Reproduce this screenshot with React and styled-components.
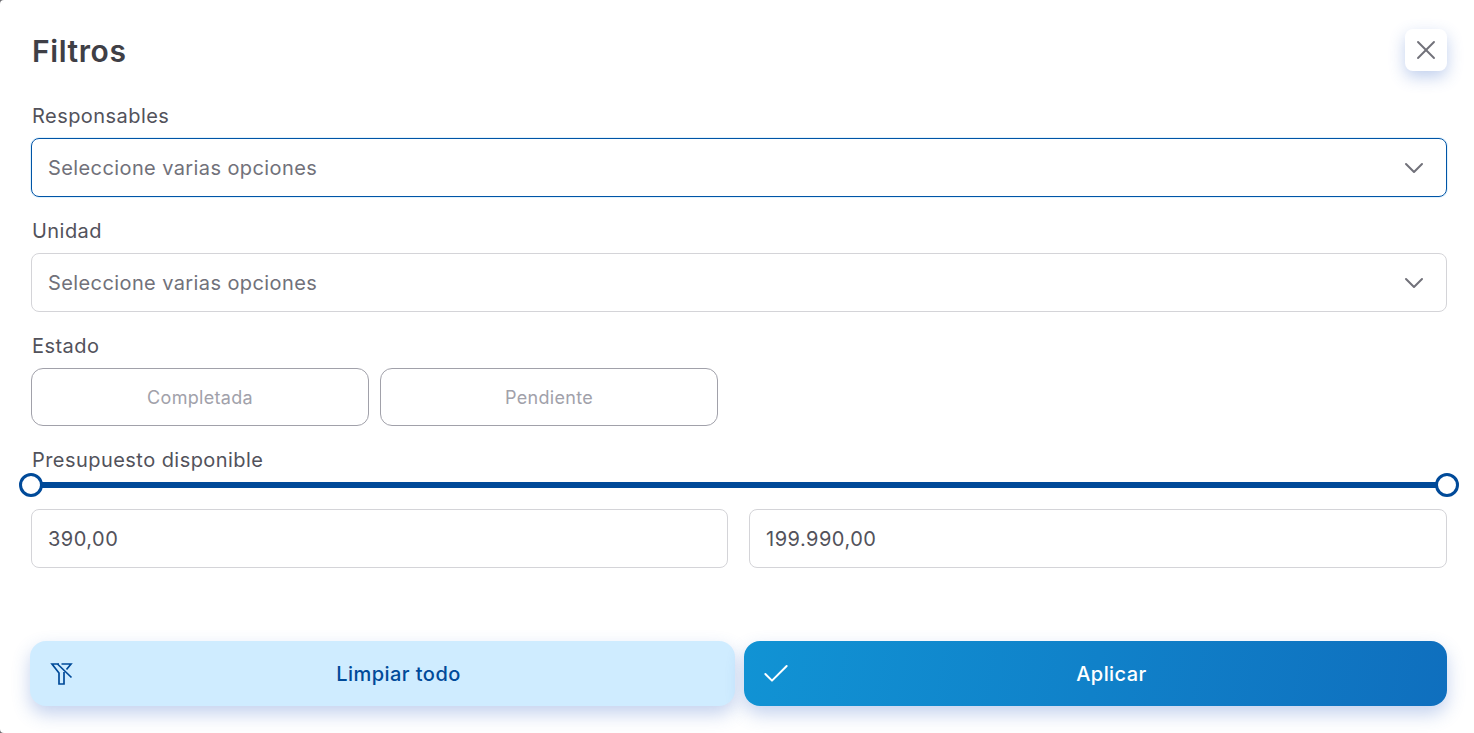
import React from "react";
import styled, { createGlobalStyle } from "styled-components";
import { X, ChevronDown, Check } from "lucide-react";

const GlobalStyle = createGlobalStyle`
  html, body {
    margin: 0;
    padding: 0;
    background: #6b6b70;
  }
  * {
    box-sizing: border-box;
  }
`;

const FilterOffIcon = () => (
  <svg width="32" height="32" viewBox="0 0 32 32" fill="none" stroke="currentColor" strokeWidth="1.7">
    <path d="M15.500 6H25L20.500 11.500" />
    <path d="M13 6H6L13 15V26H18V14" />
    <path d="M11.500 6L25.500 19.500" />
  </svg>
);

const App = () => {
  return (
    <Modal>
      <GlobalStyle />
      <Header>
        <Title>Filtros</Title>
        <CloseButton>
          <X size={32} strokeWidth={1.4} />
        </CloseButton>
      </Header>
      <Label>Responsables</Label>
      <Select $focused>
        <span>Seleccione varias opciones</span>
        <ChevronDown size={32} strokeWidth={1.5} />
      </Select>
      <Label>Unidad</Label>
      <Select>
        <span>Seleccione varias opciones</span>
        <ChevronDown size={32} strokeWidth={1.5} />
      </Select>
      <Label>Estado</Label>
      <StateRow>
        <StateButton>Completada</StateButton>
        <StateButton>Pendiente</StateButton>
      </StateRow>
      <Label $tight>Presupuesto disponible</Label>
      <Slider>
        <Track />
        <Thumb $side="left" />
        <Thumb $side="right" />
      </Slider>
      <Inputs>
        <Input>390,00</Input>
        <Input>199.990,00</Input>
      </Inputs>
      <Footer>
        <ClearButton>
          <FilterOffIcon />
          <ButtonText>Limpiar todo</ButtonText>
        </ClearButton>
        <ApplyButton>
          <Check size={32} strokeWidth={1.5} />
          <ButtonText>Aplicar</ButtonText>
        </ApplyButton>
      </Footer>
    </Modal>
  );
};

const Modal = styled.div`
  width: 1474px;
  height: 733px;
  padding: 29px 27px 0 31px;
  font-family: Inter, "Noto Sans", sans-serif;
  background: #fff;
  border-radius: 4px 0 0 4px;
  overflow: hidden;
`;

const Header = styled.div`
  display: flex;
  justify-content: space-between;
  align-items: flex-start;
  height: 42px;
  margin-bottom: 34px;
`;

const Title = styled.h1`
  margin: 4px 0 0 1px;
  font-size: 30px;
  line-height: 36px;
  font-weight: 600;
  letter-spacing: 0.6px;
  color: #3f3f46;
`;

const CloseButton = styled.button`
  display: flex;
  align-items: center;
  justify-content: center;
  width: 42px;
  height: 42px;
  padding: 0;
  border: none;
  border-radius: 8px;
  background: #fff;
  color: #71717a;
  box-shadow: 0 6px 16px rgba(59, 105, 200, 0.32);
`;

const Label = styled.div`
  height: 22px;
  margin: 0 0 ${(p) => (p.$tight ? "2px" : "11px")} 1px;
  font-size: 20px;
  line-height: 22px;
  letter-spacing: 0.45px;
  color: #52525b;
`;

const Select = styled.div`
  display: flex;
  align-items: center;
  justify-content: space-between;
  height: 59px;
  margin-bottom: 23px;
  padding: 0 16px;
  border: 1px solid ${(p) => (p.$focused ? "#0054a6" : "#d4d4d8")};
  border-radius: 8px;
  box-shadow: ${(p) => (p.$focused ? "0 0 0 1px #e0f2fe" : "none")};
  font-size: 20px;
  letter-spacing: 0.4px;
  color: #71717a;
`;

const StateRow = styled.div`
  display: flex;
  gap: 11px;
  margin-bottom: 23px;
`;

const StateButton = styled.button`
  width: 338px;
  height: 58px;
  padding: 0;
  border: 1px solid #a1a1aa;
  border-radius: 12px;
  background: #fff;
  font-family: inherit;
  letter-spacing: 0.3px;
  font-size: 18px;
  color: #a1a1aa;
`;

const Slider = styled.div`
  position: relative;
  display: flex;
  align-items: center;
  height: 24px;
`;

const Track = styled.div`
  width: 100%;
  height: 6px;
  background: #004a99;
`;

const Thumb = styled.div`
  position: absolute;
  top: 0;
  ${(p) => p.$side}: -12px;
  width: 24px;
  height: 24px;
  border: 3px solid #004a99;
  border-radius: 50%;
  background: #fff;
`;

const Inputs = styled.div`
  display: grid;
  grid-template-columns: 697px 698px;
  gap: 21px;
  margin-top: 12px;
`;

const Input = styled.div`
  display: flex;
  align-items: center;
  height: 59px;
  padding-left: 16px;
  border: 1px solid #d4d4d8;
  border-radius: 8px;
  font-size: 20px;
  letter-spacing: 0.5px;
  color: #52525b;
`;

const Footer = styled.div`
  display: grid;
  grid-template-columns: 705px 703px;
  gap: 9px;
  margin: 73px 0 0 -1px;
`;

const FooterButton = styled.button`
  display: flex;
  align-items: center;
  height: 65px;
  padding: 0 16px;
  border: none;
  border-radius: 16px;
  font-family: inherit;
  letter-spacing: 0.45px;
  font-size: 20px;
  font-weight: 500;
  box-shadow: 0 8px 18px rgba(59, 105, 200, 0.3);
`;

const ButtonText = styled.span`
  flex: 1;
  text-align: center;
`;

const ClearButton = styled(FooterButton)`
  background: #cfecff;
  color: #004a99;
`;

const ApplyButton = styled(FooterButton)`
  background: linear-gradient(100deg, #1193d4 0%, #0f6fbe 100%);
  color: #fff;
`;

export default App;
